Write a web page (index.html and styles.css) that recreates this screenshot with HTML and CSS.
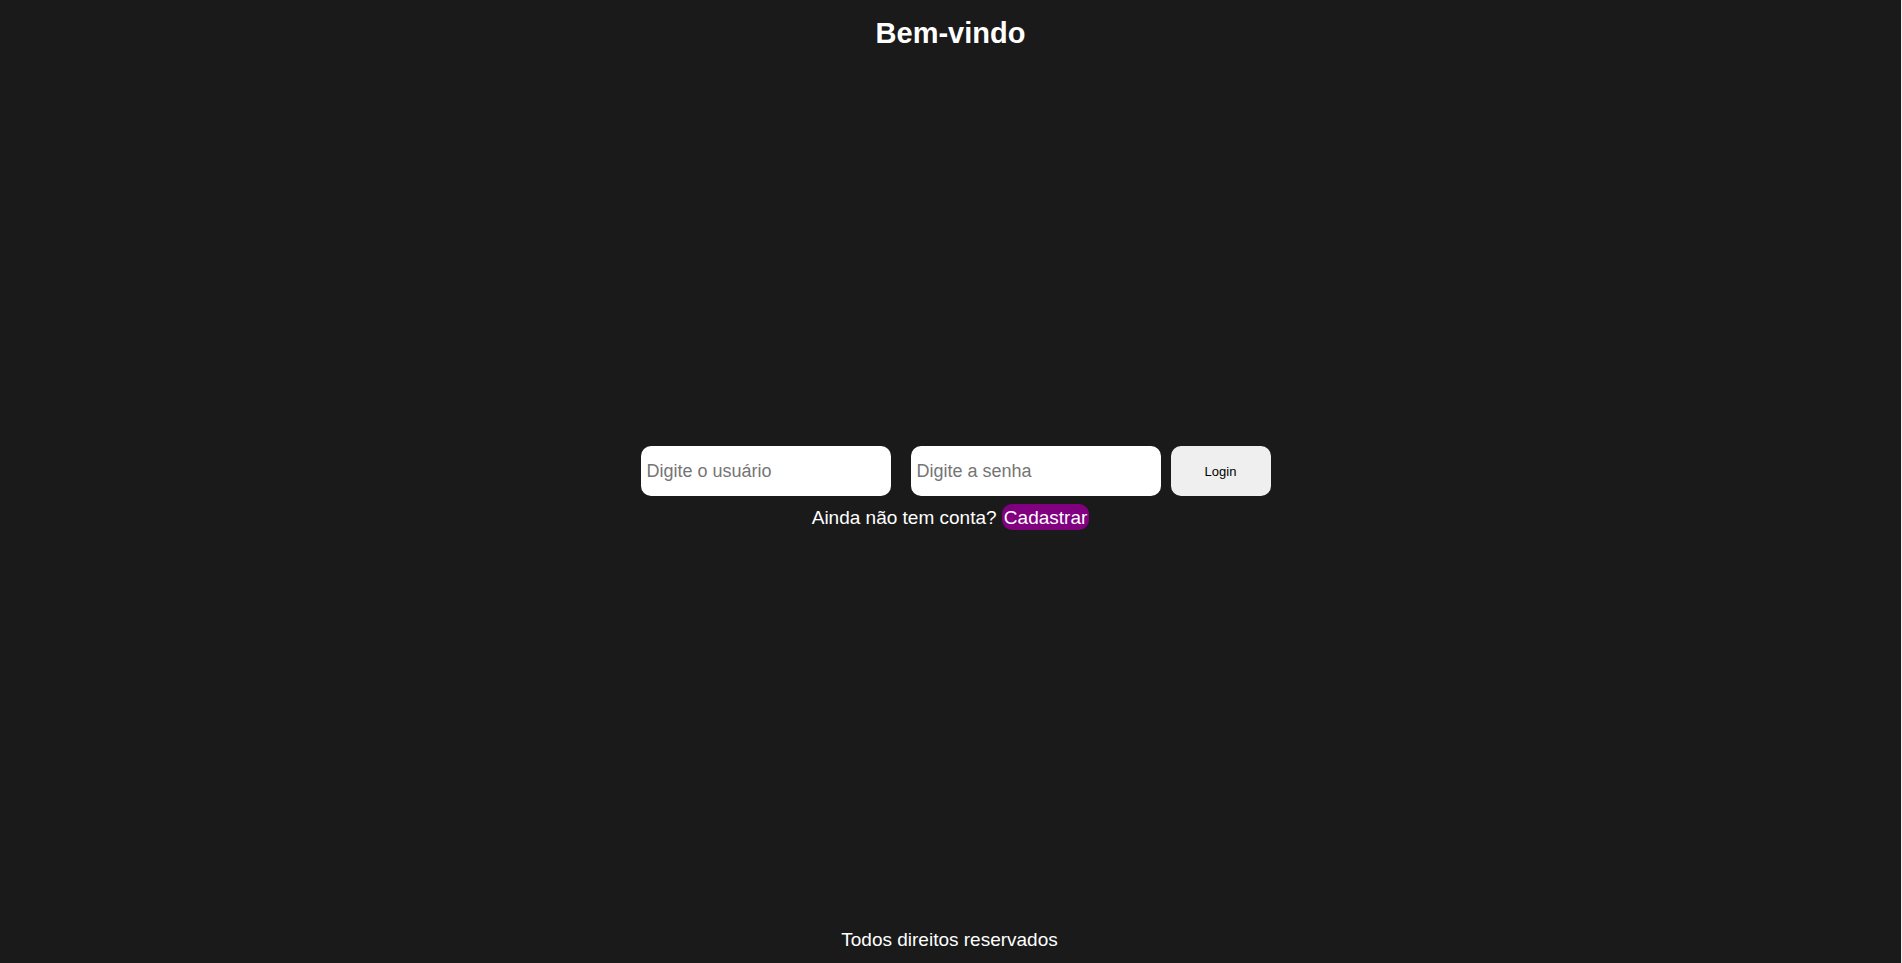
FILE: index.html
```html
<!DOCTYPE html>
<html lang="pt-BR">
<head>
<meta charset="utf-8">
<title>Bem-vindo</title>
<link rel="stylesheet" href="styles.css">
</head>
<body>
<header class="header">
<h1 class="title">Bem-vindo</h1>
</header>
<main class="main">
<form class="login">
<input class="field" type="text" placeholder="Digite o usuário" aria-label="Usuário">
<input class="field" type="password" placeholder="Digite a senha" aria-label="Senha">
<button class="submit" type="submit">Login</button>
</form>
<p class="signup">Ainda não tem conta? <a class="signup-link" href="#cadastro">Cadastrar</a></p>
</main>
<footer class="footer">
<p class="rights">Todos direitos reservados</p>
</footer>
</body>
</html>
```
FILE: styles.css
```css
* {
  box-sizing: border-box;
  margin: 0;
  padding: 0;
}

body {
  display: flex;
  flex-direction: column;
  min-height: 100vh;
  border-right: 1px solid #f0f0f0;
  background: #1a1a1a;
  color: #fff;
  font-family: "Liberation Sans", Arial, sans-serif;
  font-size: 19px;
  line-height: 22px;
}

.header {
  padding-top: 16px;
  text-align: center;
}

.title {
  font-size: 29px;
  line-height: 34px;
}

.main {
  flex: 1;
  display: flex;
  flex-direction: column;
  align-items: center;
  justify-content: center;
  gap: 11px;
  padding-bottom: 4px;
}

.login {
  display: flex;
  gap: 10px;
  padding-left: 10px;
}

.field {
  width: 250px;
  height: 50px;
  margin-right: 10px;
  padding: 0 6px;
  border: 0;
  border-radius: 10px;
  background: #fff;
  font-family: inherit;
  font-size: 18px;
}

.field::placeholder {
  color: #757575;
}

.submit {
  width: 100px;
  height: 50px;
  margin-left: -10px;
  border: 0;
  border-radius: 10px;
  background: #efefef;
  color: #000;
  font-family: "Liberation Sans", Arial, sans-serif;
  font-size: 13px;
}

.signup-link {
  padding: 3px 2px 2px;
  border-radius: 10px;
  background: #800080;
  color: #fff;
  text-decoration: none;
}

.footer {
  padding-right: 2px;
  padding-bottom: 12px;
  text-align: center;
}
```
